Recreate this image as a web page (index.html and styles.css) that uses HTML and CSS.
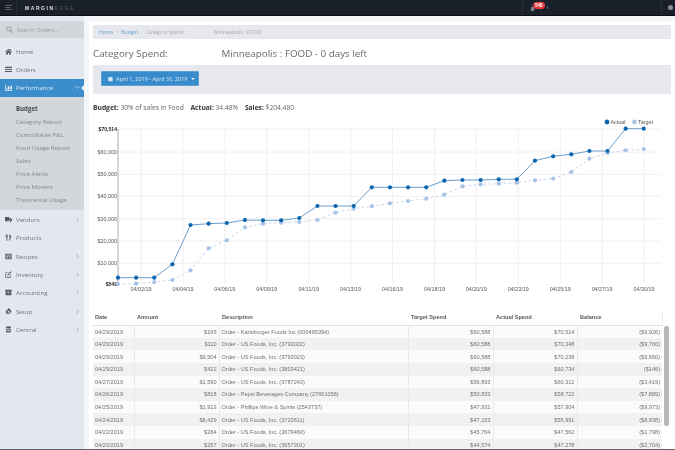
FILE: index.html
```html
<!DOCTYPE html>
<html lang="en">
<head>
<meta charset="utf-8">
<title>Category Spend</title>
<link rel="stylesheet" href="styles.css">
</head>
<body>
<div class="app">
  <header class="topbar">
    <div class="burger-cell"><svg class="burger" viewBox="0 0 8 6"><path d="M0 .5h8M0 3h6M0 5.500h8"/></svg></div>
    <div class="logo"><b>MARGIN</b><span>EDGE</span></div>
    <div class="top-spacer"></div>
    <div class="bell-cell">
      <svg class="bell" viewBox="0 0 6 6"><path d="M3 0C1.500 0 1.300 1.500 1.200 3 1.100 4 .6 4.300.4 5h5.200C5.400 4.300 4.900 4 4.800 3 4.700 1.500 4.500 0 3 0zM2.300 5.300h1.400L3 6z"/></svg>
      <span class="badge">548</span>
    </div>
    <span class="bell-tail"></span>
    <div class="user-cell"><span class="user-dot"></span></div>
  </header>
  <div class="body">
    <nav class="sidebar">
      <div class="search"><svg class="ico" viewBox="0 0 10 10"><circle cx="4" cy="4" r="3" fill="none" stroke="currentColor" stroke-width="1.400"/><path d="M6.200 6.200 9.500 9.500" stroke="currentColor" stroke-width="1.600"/></svg><span>Search Orders...</span></div>
      <a class="item"><svg class="ico" viewBox="0 0 10 10"><path d="M5 1 0 5.500l.6.7L5 2.400l4.400 3.800.6-.7L8.300 4V1.500H7v1.300zM1.700 6v3.500h2.400V7h1.800v2.500h2.400V6L5 3.200z"/></svg><span>Home</span></a>
      <a class="item"><svg class="ico" viewBox="0 0 10 10"><path d="M0 1.200h10v1.500H0zM0 4.200h10v1.500H0zM0 7.200h10v1.500H0z"/></svg><span>Orders</span></a>
      <a class="item active"><svg class="ico" viewBox="0 0 10 10"><path d="M0 1h1v7.500h9v1H0zM2 5h1.500v3H2zM4.200 3h1.500v5H4.200zM6.400 4h1.500v4H6.400zM8.400 2H10v6H8.400z"/></svg><span>Performance</span><svg class="chev down" viewBox="0 0 6 6"><path d="M.8 1.800 3 4l2.200-2.200"/></svg></a>
      <div class="submenu">
        <a class="sub current">Budget</a>
        <a class="sub">Category Report</a>
        <a class="sub">Controllable P&amp;L</a>
        <a class="sub">Food Usage Report</a>
        <a class="sub">Sales</a>
        <a class="sub">Price Alerts</a>
        <a class="sub">Price Movers</a>
        <a class="sub">Theoretical Usage</a>
      </div>
      <a class="item"><svg class="ico" viewBox="0 0 10 10"><path d="M0 1.500h6v5.700H3.400a1.300 1.300 0 0 0-2.300 0H0zM6.500 3h1.800L10 5v2.200H9a1.300 1.300 0 0 0-2.300 0h-.2z"/><circle cx="2.300" cy="8" r="1"/><circle cx="7.800" cy="8" r="1"/></svg><span>Vendors</span><svg class="chev" viewBox="0 0 6 6"><path d="M2 .8 4.200 3 2 5.200"/></svg></a>
      <a class="item"><svg class="ico" viewBox="0 0 10 10"><path d="M1 .5h.7v3h.6v-3H3v3h.6v-3h.7v3.700l-1 .6v4.700H2V4.800l-1-.6zM6.300 9.500V.5C8 .8 8.800 2.500 8.800 5.500H7.500v4z"/></svg><span>Products</span></a>
      <a class="item"><svg class="ico" viewBox="0 0 10 10"><path d="M.5 1h9v8h-9zM2 2.500v1.200h6V2.500zM2 4.800V6h2.500V4.800zM5.500 4.800V6H8V4.800zM2 7v.9h2.500V7zM5.500 7v.9H8V7z" fill-rule="evenodd"/></svg><span>Recipes</span><svg class="chev" viewBox="0 0 6 6"><path d="M2 .8 4.200 3 2 5.200"/></svg></a>
      <a class="item"><svg class="ico" viewBox="0 0 10 10"><path d="M.5 2h5.500L5 3H1.500v5.500H7V6l1-1v4.500H.5zM3.500 5.500 8.500.5l1 1-5 5-1.500.5z"/></svg><span>Inventory</span><svg class="chev" viewBox="0 0 6 6"><path d="M2 .8 4.200 3 2 5.200"/></svg></a>
      <a class="item"><svg class="ico" viewBox="0 0 10 10"><path d="M.3 1.200h9.400v2.300H.3zM.9 4h8.200v5H.9zM3.500 5v.9h3V5z" fill-rule="evenodd"/></svg><span>Accounting</span><svg class="chev" viewBox="0 0 6 6"><path d="M2 .8 4.200 3 2 5.200"/></svg></a>
      <a class="item"><svg class="ico" viewBox="0 0 10 10"><path d="M4.200.5h1.600l.2 1.300 1-.5 1.200 1.200-.6 1 1.400.3v1.600l-1.400.3.600 1-1.200 1.200-1-.6-.2 1.400H4.200L4 8.300l-1 .6-1.200-1.200.6-1L1 6.400V4.800l1.400-.3-.6-1L3 2.300l1 .5zM5 3.800a1.500 1.500 0 1 0 .01 0z" fill-rule="evenodd"/></svg><span>Setup</span><svg class="chev" viewBox="0 0 6 6"><path d="M2 .8 4.200 3 2 5.200"/></svg></a>
      <a class="item"><svg class="ico" viewBox="0 0 10 10"><path d="M1.500 1.300C1.500.6 8.500.6 8.500 1.300V3c0 .8-7 .8-7 0zM1.500 4C3 5 7 5 8.500 4v1.600c0 .8-7 .8-7 0zM1.500 6.600C3 7.600 7 7.600 8.500 6.600v1.800c0 1-7 1-7 0z"/></svg><span>Central</span><svg class="chev" viewBox="0 0 6 6"><path d="M2 .8 4.200 3 2 5.200"/></svg></a>
    </nav>
    <main class="main">
      <div class="crumbs"><a>Home</a><i>/</i><a>Budget</a><i>/</i><span class="crumb-a">Category Spend:</span><span class="crumb-b">Minneapolis : FOOD</span></div>
      <h1 class="title"><span class="title-a">Category Spend:</span><span>Minneapolis : FOOD - 0 days left</span></h1>
      <div class="toolbar"><button class="range"><svg class="cal" viewBox="0 0 8 8"><path d="M.5 1.200h7v6.300h-7z M2 .3h.8v1.400H2zM5.200.3H6v1.400h-.8z"/></svg><span>April 1, 2019 - April 30, 2019</span><span class="caret"></span></button></div>
      <p class="summary"><b>Budget:</b> 30% of sales in Food <b class="gap">Actual:</b> 34.48% <b class="gap">Sales:</b> $204,480</p>
      <svg class="chart" id="chart" viewBox="0 0 586 194" width="586" height="194" aria-label="Category spend chart"></svg>
      <div class="table-wrap">
        <table class="grid">
          <colgroup><col class="c1"><col class="c2"><col class="c3"><col class="c4"><col class="c5"><col class="c6"></colgroup>
          <thead><tr><th>Date</th><th>Amount</th><th>Description</th><th>Target Spend</th><th>Actual Spend</th><th>Balance</th></tr></thead>
          <tbody>
            <tr><td>04/29/2019</td><td class="n">$166</td><td>Order - Karlsburger Foods Inc (000495394)</td><td class="n">$60,588</td><td class="n">$70,514</td><td class="n">($9,926)</td></tr>
            <tr><td>04/29/2019</td><td class="n">$110</td><td>Order - US Foods, Inc. (3793022)</td><td class="n">$60,588</td><td class="n">$70,348</td><td class="n">($9,760)</td></tr>
            <tr><td>04/29/2019</td><td class="n">$9,504</td><td>Order - US Foods, Inc. (3793023)</td><td class="n">$60,588</td><td class="n">$70,238</td><td class="n">($9,650)</td></tr>
            <tr><td>04/29/2019</td><td class="n">$422</td><td>Order - US Foods, Inc. (3803421)</td><td class="n">$60,588</td><td class="n">$60,734</td><td class="n">($146)</td></tr>
            <tr><td>04/27/2019</td><td class="n">$1,590</td><td>Order - US Foods, Inc. (3787243)</td><td class="n">$56,893</td><td class="n">$60,312</td><td class="n">($3,419)</td></tr>
            <tr><td>04/26/2019</td><td class="n">$818</td><td>Order - Pepsi Beverages Company (27661056)</td><td class="n">$50,833</td><td class="n">$58,722</td><td class="n">($7,889)</td></tr>
            <tr><td>04/25/2019</td><td class="n">$1,913</td><td>Order - Phillips Wine &amp; Spirits (2543737)</td><td class="n">$47,931</td><td class="n">$57,904</td><td class="n">($9,973)</td></tr>
            <tr><td>04/24/2019</td><td class="n">$8,429</td><td>Order - US Foods, Inc. (3720611)</td><td class="n">$47,153</td><td class="n">$55,991</td><td class="n">($8,838)</td></tr>
            <tr><td>04/22/2019</td><td class="n">$284</td><td>Order - US Foods, Inc. (3679460)</td><td class="n">$45,764</td><td class="n">$47,562</td><td class="n">($1,798)</td></tr>
            <tr><td>04/20/2019</td><td class="n">$257</td><td>Order - US Foods, Inc. (3657301)</td><td class="n">$44,574</td><td class="n">$47,278</td><td class="n">($2,704)</td></tr>
          </tbody>
        </table>
        <div class="scroll-thumb"></div>
      </div>
    </main>
  </div>
</div>
<script src="chart.js"></script>
</body>
</html>
```
FILE: styles.css
```css
* { box-sizing: border-box; }
html, body { margin: 0; height: 100%; overflow: hidden; background: #fff; }
body { font-family: "Open Sans", sans-serif; color: #666; }
.app { height: 450px; display: flex; flex-direction: column; border-bottom: 1px solid #666; filter: blur(.45px); }

.topbar { height: 16px; flex: none; display: flex; align-items: stretch; background: #1a2029; border-bottom: 1px solid #0b0d10; }
.burger-cell { width: 17px; display: flex; align-items: center; justify-content: center; border-right: 1px solid #262d37; }
.burger { width: 7px; height: 5px; fill: none; stroke: #6b7079; stroke-width: 1; }
.logo { margin-left: 8px; align-self: center; font: 5px "Liberation Sans", sans-serif; letter-spacing: 1.550px; color: #59606a; }
.logo b { color: #dfe2e6; font-weight: 700; }
.top-spacer { flex: 1; }
.bell-cell { width: 19px; position: relative; display: flex; align-items: center; padding-left: 7px; border-left: 1px solid #262d37; border-right: 1px solid #262d37; }
.bell { width: 5px; height: 6px; fill: #858a91; margin-top: 2px; }
.badge { position: absolute; left: 9.500px; top: 2px; background: #e5393f; color: #fff; border-radius: 4px; font: 700 4.500px/7px "Liberation Sans", sans-serif; padding: 0 2.500px; }
.bell-tail { width: 1px; height: 3px; margin: 6px 113px 0 6px; background: #5c6168; }
.user-cell { display: flex; width: 14px; align-items: center; justify-content: center; border-left: 1px solid #262d37; }
.user-dot { width: 5px; height: 5px; border-radius: 50%; background: #8b8f95; margin-left: 4px; }

.body { flex: 1; display: flex; min-height: 0; background: #f4f5f9; }
.sidebar { width: 84px; flex: none; background: #e4e7f0; padding-top: 5px; font-size: 6.100px; color: #6b6f75; }
.search { height: 17px; background: #d3d6da; display: flex; align-items: center; padding-left: 6px; gap: 4px; color: #9a9da2; font-size: 5.600px; margin-bottom: 4px; }
.ico { width: 7px; height: 7px; flex: none; fill: currentColor; }
.item { height: 18.400px; display: flex; align-items: center; padding: 0 4px 0 5px; gap: 4px; color: #6f7378; }
.item .ico { color: #55595f; }
.item span { flex: 1; }
.chev { width: 5px; height: 5px; fill: none; stroke: #9a9ea6; stroke-width: 1; flex: none; }
.item.active { background: #3b8dcc; color: #dfeaf4; position: relative; }
.item.active .ico { color: #e8f0f7; }
.item.active .chev { stroke: #cfe2f1; }
.item.active::after { content: ""; position: absolute; right: 0; top: 6px; border: 3px solid transparent; border-right-color: #f4f5f9; border-left-width: 0; }
.submenu { background: #d3d6da; padding: 4.500px 0 4px; }
.sub { display: block; height: 13.050px; line-height: 13px; padding-left: 16px; font-size: 6.100px; color: #84878c; }
.sub.current { color: #44474c; font-weight: 700; }

.main { flex: 1; min-width: 0; margin: 5px 0 0 5px; padding: 4px 4px 0; background: #fff; display: flex; flex-direction: column; }
.crumbs { height: 14px; flex: none; background: #e6e8ed; display: flex; align-items: center; padding-left: 6px; font-size: 5.100px; color: #a5a8ad; }
.crumbs a { color: #6ba3d2; }
.crumbs i { font-style: normal; color: #ccc; margin: 0 3px; }
.crumb-b { margin-left: 29px; }
.title { flex: none; margin: 6px 0 0; font-size: 9.800px; line-height: 17px; font-weight: 400; color: #666a6f; display: flex; height: 20px; }
.title-a { width: 128.500px; }
.toolbar { flex: none; height: 29px; margin-top: 0; background: #e6e8ed; padding: 6px 0 0 8px; }
.range { width: 98px; height: 15px; display: flex; align-items: center; gap: 3px; padding: 0 0 0 6px; margin: 0; border: 1px solid #5da1d8; border-radius: 1px; background: #398ccc; color: #d8e8f5; font: 5.500px "Open Sans", sans-serif; }
.cal { width: 5px; height: 6px; fill: #d8e8f5; flex: none; }
.caret { border: 2.500px solid transparent; border-top-color: #eef5fb; border-bottom-width: 0; margin-left: 0; }
.summary { flex: none; margin: 0; padding-top: 10px; height: 24px; font-size: 6.700px; line-height: 8px; color: #666; white-space: pre-wrap; }
.summary b { color: #33363a; }
.summary .gap { margin-left: 5px; }
.chart { display: block; flex: none; margin-left: -4px; overflow: visible; }
.chart text { font-family: "Liberation Sans", sans-serif; font-size: 5.400px; fill: #55585c; }
.chart text.strong { fill: #222; font-weight: 700; font-size: 5.100px; }
.grid-h, .grid-v { stroke: #f0f0f2; stroke-width: 1; }
.axis-y { stroke: #b9bbbf; stroke-width: 1.200; }
.line-actual { fill: none; stroke: #6a9fcd; stroke-width: 1; }
.line-target { fill: none; stroke: #c5d6ee; stroke-width: 1; stroke-dasharray: 2.500 2.500; }
.dot-actual { fill: #0b65ae; }
.dot-target { fill: #a7c3e8; }

.table-wrap { flex: 1; min-height: 0; overflow: hidden; position: relative; margin-top: 0; }
.grid { table-layout: fixed; width: 569px; border-collapse: collapse; font-family: "Liberation Sans", sans-serif; font-size: 5.600px; color: #6e7175; }
.c1 { width: 41px; } .c2 { width: 85px; } .c3 { width: 189px; } .c4 { width: 85px; } .c5 { width: 84px; } .c6 { width: 85px; }
.grid th { height: 13px; text-align: left; padding: 0 0 2px 3px; font-weight: 700; color: #55585c; border-bottom: 1px solid #dfe0e2; white-space: nowrap; }
.grid th:first-child { padding-left: 2px; }
.grid th:last-child { border-right: 1px solid #eceded; }
.grid td { height: 12.630px; padding: 0 2px; white-space: nowrap; overflow: hidden; border-left: 1px solid #e8e9ea; }
.grid td:first-child { border-left: 0; }
.grid td.n { text-align: right; }
.grid tbody tr:nth-child(odd) { background: #fbfbfb; }
.grid tbody tr:nth-child(even) { background: #f1f1f1; }
.scroll-thumb { position: absolute; left: 571px; top: 14px; width: 4.500px; height: 100px; background: #b5b6b8; border-radius: 2px; }
```
FILE: chart.js
```js
(function () {
  var NS = "http://www.w3.org/2000/svg";
  var svg = document.getElementById("chart");
  var ox = 89, oy = 118;
  function el(name, attrs, text) {
    var e = document.createElementNS(NS, name);
    for (var k in attrs) e.setAttribute(k, attrs[k]);
    if (text) e.textContent = text;
    svg.appendChild(e);
    return e;
  }
  var actual = [533,533,533,493,375,371,369,360,361,361,354,318,318,318,262,262,262,262,242,240,240,238,238,182,169,163,153,153,86,86];
  var target = [552,551,546,540,511,445,421,382,371,368,366,360,338,326,319,310,303,296,284,259,253,251,248,241,236,216,176,159,151,147];
  function X(i) { return 118 + i * 18.13 - ox; }
  function Y(v) { return 100 + v / 3 - oy; }
  var yLines = [
    [129, "$70,514", true], [152, "$60,000"], [174.3, "$50,000"], [196.3, "$40,000"],
    [218.7, "$30,000"], [241, "$20,000"], [263.3, "$10,000"], [284, "$549", true]
  ];
  yLines.forEach(function (l) {
    var y = l[0] - oy;
    if (l[0] !== 284) el("line", { "class": "grid-h", x1: 118 - ox, x2: 661 - ox, y1: y, y2: y });
    el("text", { x: 117 - ox, y: y + 2, "text-anchor": "end", "class": l[2] ? "strong" : "" }, l[1]);
  });
  var labels = ["04/02/19","04/04/19","04/06/19","04/09/19","04/11/19","04/13/19","04/16/19","04/18/19","04/20/19","04/23/19","04/25/19","04/27/19","04/30/19"];
  labels.forEach(function (t, i) {
    var x = 141 + i * 41.92 - ox;
    el("line", { "class": "grid-v", x1: x, x2: x, y1: 129 - oy, y2: 284 - oy });
    el("text", { x: x, y: 291 - oy, "text-anchor": "middle" }, t);
  });
  el("line", { "class": "axis-y", x1: 118 - ox, x2: 118 - ox, y1: 129 - oy, y2: 284 - oy });
  function pts(a) { return a.map(function (v, i) { return X(i).toFixed(1) + "," + Y(v).toFixed(1); }).join(" "); }
  el("polyline", { "class": "line-target", points: pts(target) });
  el("polyline", { "class": "line-actual", points: pts(actual) });
  target.forEach(function (v, i) { el("circle", { "class": "dot-target", cx: X(i), cy: Y(v), r: 2.100 }); });
  actual.forEach(function (v, i) { el("circle", { "class": "dot-actual", cx: X(i), cy: Y(v), r: 2.100 }); });
  el("circle", { "class": "dot-actual", cx: 607 - ox, cy: 122 - oy, r: 2.400 });
  el("text", { x: 610.500 - ox, y: 124 - oy }, "Actual");
  el("circle", { "class": "dot-target", cx: 634.500 - ox, cy: 122 - oy, r: 2.400 });
  el("text", { x: 638 - ox, y: 124 - oy }, "Target");
})();
```
